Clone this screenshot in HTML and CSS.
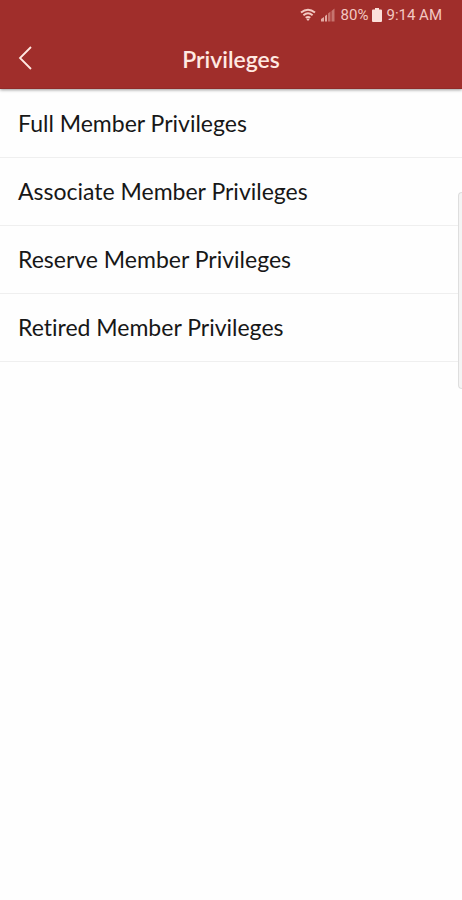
FILE: index.html
```html
<!DOCTYPE html>
<html lang="en">
<head>
<meta charset="utf-8">
<meta name="viewport" content="width=device-width, initial-scale=1">
<title>Privileges</title>
<link rel="stylesheet" href="styles.css">
</head>
<body>
<header class="header">
  <div class="status">
    <svg class="wifi" width="16" height="14" viewBox="0 0 16 14" aria-hidden="true">
      <path d="M1 4.5Q8-1.2 15 4.5M3.4 7.2Q8 3.4 12.6 7.2M5.7 9.8Q8 8 10.3 9.8" fill="none" stroke="currentColor" stroke-width="1.9"/>
      <path d="M6.3 11Q8 10 9.7 11L8 13Z" fill="currentColor"/>
    </svg>
    <svg class="signal" width="14" height="14" viewBox="0 0 14 14" aria-hidden="true">
      <path d="M0 13.5V11L3 9v4.5ZM4 13.5V8l2-1.5v7Z" fill="currentColor" opacity=".8"/>
      <path d="M7 13.5V5.5L9.500 3.500v10ZM10.500 13.500V3L13.500 0.500v13Z" fill="currentColor" opacity=".45"/>
    </svg>
    <span class="charge">80%</span>
    <svg class="battery" width="10" height="14" viewBox="0 0 10 14" aria-hidden="true">
      <path d="M3 0h4v1.500h2a1 1 0 0 1 1 1V13a1 1 0 0 1-1 1H1a1 1 0 0 1-1-1V2.500a1 1 0 0 1 1-1h2Z" fill="currentColor"/>
    </svg>
    <time>9:14 AM</time>
  </div>
  <div class="bar">
    <button class="back" type="button" aria-label="Back">
      <svg width="14" height="24" viewBox="0 0 14 24" aria-hidden="true">
        <path d="M13 1L2 12l11 11" fill="none" stroke="currentColor" stroke-width="1.800"/>
      </svg>
    </button>
    <h1 class="title">Privileges</h1>
  </div>
</header>
<main>
  <ul class="list">
    <li><a href="#full">Full Member Privileges</a></li>
    <li><a href="#associate">Associate Member Privileges</a></li>
    <li><a href="#reserve">Reserve Member Privileges</a></li>
    <li><a href="#retired">Retired Member Privileges</a></li>
  </ul>
</main>
<div class="edge-handle"></div>
</body>
</html>
```
FILE: styles.css
```css
* { box-sizing: border-box; }
body {
  margin: 0;
  min-height: 100vh;
  background: #fefefe;
  color: #171717;
  font-family: Lato, "Open Sans", sans-serif;
  font-variant-ligatures: none;
  overflow-x: hidden;
}
.header {
  background: #a02e2b;
  color: #ffe9e2;
  border-bottom: 1px solid #912b28;
  box-shadow: 0 1px 3px rgba(0, 0, 0, .4);
}
.status {
  display: flex;
  align-items: center;
  justify-content: flex-end;
  height: 30px;
  padding-right: 20px;
  color: #f3c9c2;
  font: 15px/30px Roboto, sans-serif;
}
.signal { margin-left: 5px; }
.charge { margin-left: 6px; }
.battery { margin: 0 4px; color: #fbe0da; }
.bar {
  display: grid;
  grid-template-columns: 52px 1fr 52px;
  align-items: center;
  height: 58px;
}
.back {
  display: flex;
  align-items: center;
  height: 48px;
  padding: 0 0 2px 18px;
  border: 0;
  background: none;
  color: inherit;
}
.title {
  margin: 0;
  text-align: center;
  font-size: 23px;
  line-height: 28px;
  font-weight: 600;
}
.list {
  margin: 0;
  padding: 1px 0 0;
  list-style: none;
}
.list a {
  display: block;
  padding: 18px;
  border-bottom: 1px solid #efefef;
  color: inherit;
  font-size: 23px;
  line-height: 31px;
  text-decoration: none;
}
.edge-handle {
  position: absolute;
  top: 192px;
  right: 0;
  width: 4px;
  height: 197px;
  border: 1px solid #dedede;
  border-right: 0;
  border-radius: 4px 0 0 4px;
  background: #f4f4f4;
}
```
